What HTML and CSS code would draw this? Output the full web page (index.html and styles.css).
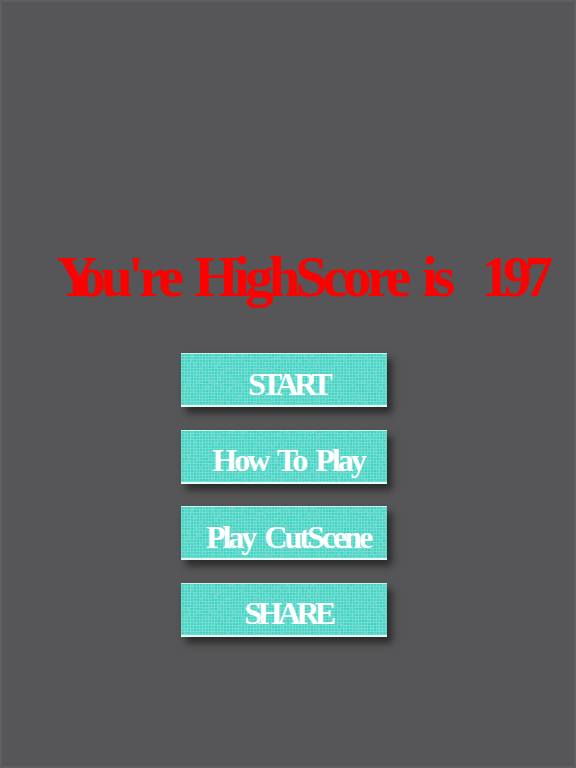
FILE: index.html
```html
<!DOCTYPE html>
<html lang="en">
<head>
    <meta charset="UTF-8">
    <meta name="viewport" content="width=device-width, initial-scale=1.0">
    <title>High Score</title>
    <link rel="stylesheet" href="styles.css">
</head>
<body>
    <div class="screen">
        <h1 class="score"><span class="kern">Y</span>ou're HighScore is&nbsp; <span class="digits">197</span></h1>
        <div class="menu">
            <a href="#" class="menu-button tight">START</a>
            <a href="#" class="menu-button">How To Play</a>
            <a href="#" class="menu-button">Play CutScene</a>
            <a href="#" class="menu-button tight">SHARE</a>
        </div>
    </div>
</body>
</html>
```

FILE: styles.css
```css
/* General Styles */
html, body {
    margin: 0;
    padding: 0;
}

.screen {
    width: 576px;
    height: 768px;
    box-sizing: border-box;
    padding-top: 245px;
    display: flex;
    flex-direction: column;
    align-items: center;
    overflow: hidden;
    background-color: #565557;
    box-shadow: inset 0 0 0 2px #5f5e60;
    font-family: "Liberation Serif", "Times New Roman", serif;
}

/* Score */
.score {
    margin: 0 0 44px 26px;
    font-size: 57px;
    line-height: 64px;
    font-weight: bold;
    letter-spacing: -4.8px;
    word-spacing: 6px;
    white-space: nowrap;
    color: #ff0000;
}

.kern {
    letter-spacing: -20px;
}

.digits {
    letter-spacing: -7px;
}

/* Buttons */
.menu {
    display: flex;
    flex-direction: column;
    gap: 22.6px;
    margin-right: 8px;
}

.menu-button {
    width: 206px;
    height: 54px;
    box-sizing: border-box;
    padding: 9px 0 0 8px;
    display: flex;
    justify-content: center;
    align-items: center;
    border-top: 1px solid #c8f5ec;
    border-bottom: 2px solid #e4faf5;
    text-decoration: none;
    font-size: 32px;
    letter-spacing: -3px;
    word-spacing: 5px;
    font-weight: bold;
    white-space: nowrap;
    color: #ffffff;
    background-color: #4ddfce;
    background-image:
        url("data:image/svg+xml,%3Csvg xmlns='http://www.w3.org/2000/svg' width='206' height='54'%3E%3Cfilter id='n'%3E%3CfeTurbulence type='fractalNoise' baseFrequency='0.3' numOctaves='2' seed='4'/%3E%3CfeColorMatrix values='0 0 0 0 0.2 0 0 0 0 0.68 0 0 0 0 0.62 2.4 0 0 0 -0.95'/%3E%3C/filter%3E%3Crect width='206' height='54' filter='url(%23n)'/%3E%3C/svg%3E"),
        repeating-linear-gradient(0deg, rgba(190, 255, 245, 0.22) 0 1px, rgba(0, 120, 105, 0.07) 1px 3px),
        repeating-linear-gradient(90deg, rgba(190, 255, 245, 0.2) 0 1px, rgba(0, 120, 105, 0.07) 1px 3px);
    box-shadow: 5px 6px 7px rgba(30, 30, 30, 0.75);
}

.menu-button.tight {
    letter-spacing: -4.6px;
}
```
